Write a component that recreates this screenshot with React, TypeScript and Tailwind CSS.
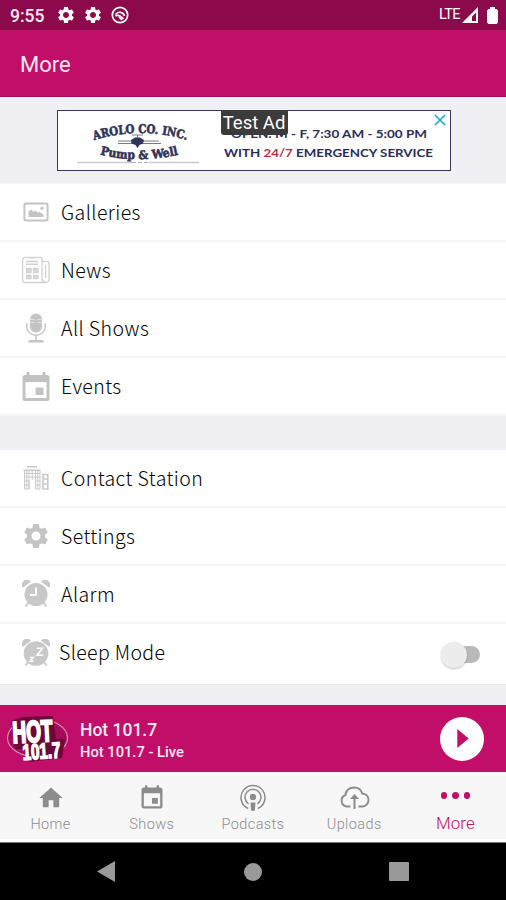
import React from 'react'
import { MdSettings, MdHome, MdEvent } from 'react-icons/md'

const SANS = "font-['Noto_Sans_CJK_SC','Noto_Sans',sans-serif]"

function GalleryIcon() {
  return (
    <svg width="26" height="20" viewBox="0 0 26 20" fill="none">
      <rect x="1.4" y="1.4" width="23.2" height="17.2" rx="2" stroke="#c4c4c4" strokeWidth="2" />
      <path d="M5.500 15V9.500L8 7.500l2.700 2.200 1.800-1 2.200 1.800 1.500-.8 4.300 2.800V15z" fill="#c4c4c4" />
      <circle cx="19" cy="6.2" r="1.7" fill="#c8c8c8" />
    </svg>
  )
}

function NewsIcon() {
  return (
    <svg width="30" height="28" viewBox="0 0 30 28" fill="none" stroke="#d2d2d2" strokeWidth="1.3">
      <path d="M21 24V3a1.5 1.5 0 0 0-1.5-1.5h-16A2 2 0 0 0 1.6 3.5v21a2 2 0 0 0 2 2H25a3 3 0 0 0 3-3V7.5a2 2 0 0 0-2-2h-5" />
      <path d="M21 23a3 3 0 0 0 3 3M24.5 9v13" />
      <path d="M5 5.500h12M5 8.200h12" strokeWidth="1.600" />
      <path d="M5.500 12.500h4.500v4H5.500zM12.500 12.500H17v4h-4.500zM5.500 19.500H10v3H5.500zM12.500 19.500H17v3h-4.500z" fill="#dadada" />
    </svg>
  )
}

function MicIcon() {
  return (
    <svg width="22" height="30" viewBox="0 0 22 30" fill="none" stroke="#c4c4c4">
      <rect x="5" y="0.5" width="12" height="19" rx="6" fill="#c4c4c4" stroke="none" />
      <path d="M5 6.500h4.500M5 9.500h4.500M12.500 6.500H17M12.500 9.500H17" stroke="#e6e6e6" strokeWidth="0.900" />
      <path d="M1.700 10.500v3a9.300 8.800 0 0 0 18.600 0v-3M11 22.500V28" strokeWidth="1.500" />
      <path d="M3 29.500q0-2.500 2.500-2.500h11q2.500 0 2.500 2.500z" fill="#c4c4c4" stroke="none" />
    </svg>
  )
}

function CalendarIcon() {
  return (
    <svg width="28" height="31" viewBox="0 0 28 31">
      <path fillRule="evenodd" d="M4.500 1h3v3h13V1h3v3H25a2.500 2.500 0 0 1 2.500 2.500v21A2.500 2.500 0 0 1 25 30H3a2.500 2.500 0 0 1-2.500-2.500v-21A2.500 2.500 0 0 1 3 4h1.500zM3.500 11v16h21V11z" fill="#c2c2c2" />
      <path d="M13.500 16.500h8v7.500h-8z" fill="#c2c2c2" />
    </svg>
  )
}

function BuildingIcon() {
  return (
    <svg width="26" height="24" viewBox="0 0 26 24" fill="none" stroke="#cacaca">
      <path d="M4 .8h10M0.500 4.200h17" strokeWidth="1.500" />
      <path d="M1.500 5v18h4.500V11.500M17 5v18h-4.500V11.500M6 23v-9M1.500 7.500H17M6 5v6M9.200 5v9M12.500 5v7M1.500 11H17M1.500 15H6M12.500 15H17M1.500 19H6M12.500 19H17M3.800 5v18M14.800 5v18" strokeWidth="1" />
      <path d="M20 8.500h4.800V23H20zM20 13h5M20 18h5" strokeWidth="1.600" />
    </svg>
  )
}

function ClockIcon({ sleep = false }: { sleep?: boolean }) {
  return (
    <svg width="28" height="28" viewBox="0 0 28 28" fill="#c8c8c8">
      <path d="M.8 7.800a5 5 0 0 1 8.200-6zM27.200 7.800a5 5 0 0 0-8.200-6z" />
      <path d="M6.500 22.500 3.500 26.500M21.500 22.500l3 4" stroke="#c8c8c8" strokeWidth="1.800" />
      <circle cx="14" cy="14.5" r={sleep ? 12.3 : 11.5} />
      {sleep ? (
        <path d="M14.500 9.200h6l-5.500 7h6.300M7.800 18.500h3.500l-3.300 3.800h3.600" fill="none" stroke="#fff" strokeWidth="1.500" />
      ) : (
        <path d="M14 7.500v7.500H8" fill="none" stroke="#fff" strokeWidth="1.900" />
      )}
    </svg>
  )
}

function PodcastIcon() {
  return (
    <svg width="28" height="28" viewBox="0 0 28 28" fill="none" stroke="#8c8c8c" strokeWidth="1.500">
      <path d="M9.200 24.500a12 12 0 1 1 9.600 0" />
      <path d="M9.500 19.800a8 8 0 1 1 9 0" />
      <circle cx="14" cy="13" r="3.2" fill="#8c8c8c" stroke="none" />
      <path d="M11.500 18.500h5l-.6 8.200h-3.800z" fill="#8c8c8c" stroke="none" />
    </svg>
  )
}

function UploadIcon() {
  return (
    <svg width="31" height="24" viewBox="0 0 31 24" fill="none" stroke="#8c8c8c" strokeWidth="1.900">
      <path d="M11.500 20.500H7.500A6 6 0 0 1 6.500 9C6.500 4.500 10.500 1.500 15 1.500c4 0 7.300 2.500 8.200 6 3.800.2 6.300 3 6.300 6.500s-2.800 6.500-6.500 6.500h-3.500" />
      <path d="M15.500 23V10.500" strokeWidth="2" />
      <path d="M11 13l4.500-5 4.500 5z" fill="#8c8c8c" stroke="none" />
    </svg>
  )
}

function AdBanner() {
  return (
    <div className="relative h-[61px] w-[394px] border-[1.500px] border-[#34345f] bg-white">
      <svg width="392" height="59" viewBox="58 111 392 59" className="block">
        <path id="archTop" d="M94 140Q140 126 187 140" fill="none" />
        <path id="archBottom" d="M100 154.500Q139 164 179 154.500" fill="none" />
        <g fontFamily="'DejaVu Serif', serif" fontWeight="700" fill="#303358" stroke="#303358" strokeWidth="0.600">
          <text fontSize="12"><textPath href="#archTop" textLength="94" lengthAdjust="spacingAndGlyphs">AROLO CO. INC.</textPath></text>
          <text fontSize="12"><textPath href="#archBottom" textLength="79" lengthAdjust="spacingAndGlyphs">Pump &amp; Well</textPath></text>
        </g>
        <path d="M132 135h11M137.500 135v4M118 141h14M143 141h16M118 143.500h43" stroke="#777a91" strokeWidth="1.100" fill="none" />
        <path d="M131 140l4-2.500h5l4 2.500-1 3.500-3.500 1.500-2 3-2-3-4-1.500z" fill="#303358" />
        <path d="M77 162.500h55M149 162.500h50" stroke="#c9cccb" strokeWidth="1.500" />
        <path d="M132 162.500h17" stroke="#aaaeb4" strokeWidth="1" strokeDasharray="4 2" />
        <g fontFamily="Lato, sans-serif" fontWeight="700" fill="#2c2b59" fontSize="12">
          <text x="231" y="138" textLength="196" lengthAdjust="spacingAndGlyphs">OPEN: M - F, 7:30 AM - 5:00 PM</text>
          <text x="224" y="156.5" textLength="209" lengthAdjust="spacingAndGlyphs">WITH <tspan fill="#b5303a">24/7</tspan> EMERGENCY SERVICE</text>
        </g>
        <path d="M435 115l10 10M445 115l-10 10" stroke="#19a9cc" strokeWidth="1.600" />
      </svg>
      <div className="absolute left-[163px] top-[-1px] h-[25px] w-[67px] rounded-b-[3px] bg-[#3b3b3b] text-center font-['Roboto',sans-serif] text-[18.500px] leading-[27px] text-white whitespace-nowrap">Test Ad</div>
    </div>
  )
}

function StationLogo() {
  return (
    <svg width="64" height="52" viewBox="0 0 64 52" className="overflow-visible">
      <ellipse cx="31.5" cy="25" rx="30" ry="19" fill="#a50b59" stroke="#d796b5" strokeWidth="1.100" />
      <path d="M5 8l12-4 30-1 3 23h9l-3 19-33 4-3-13H9z" fill="#6c0739" />
      <g fontFamily="'Liberation Sans', sans-serif" fontWeight="700" fill="#fff" stroke="#fff" strokeWidth="1.500">
        <text transform="translate(7 30) rotate(-3) scale(1 1.500)" fontSize="20" textLength="40" lengthAdjust="spacingAndGlyphs">HOT</text>
        <text transform="translate(17 47) rotate(-4)" fontSize="22" textLength="38" lengthAdjust="spacingAndGlyphs">101.7</text>
      </g>
    </svg>
  )
}

const contentRows = [
  { label: 'Galleries', icon: <GalleryIcon /> },
  { label: 'News', icon: <NewsIcon /> },
  { label: 'All Shows', icon: <MicIcon /> },
  { label: 'Events', icon: <CalendarIcon /> },
]

const stationRows = [
  { label: 'Contact Station', icon: <BuildingIcon /> },
  { label: 'Settings', icon: <MdSettings size={30} color="#c4c4c4" /> },
  { label: 'Alarm', icon: <ClockIcon /> },
]

const tabs = [
  { label: 'Home', icon: <MdHome size={28} /> },
  { label: 'Shows', icon: <MdEvent size={28} /> },
  { label: 'Podcasts', icon: <PodcastIcon /> },
  { label: 'Uploads', icon: <UploadIcon /> },
]

function Row({ label, icon }: { label: string; icon: React.ReactNode }) {
  return (
    <div className="flex h-[58px] items-center border-b-2 border-[#f5f5f6] bg-white pl-[21px]">
      <div className="flex w-[30px] justify-center">{icon}</div>
      <span className={`${SANS} -mt-px ml-[10px] text-[19.500px] font-light leading-[28px] tracking-[0.430px] text-black`}>{label}</span>
    </div>
  )
}

export default function App() {
  return (
    <main className="flex h-[900px] w-[506px] flex-col overflow-hidden bg-[#f0eff4] font-['Roboto',sans-serif]">
      <div className="flex h-[30px] shrink-0 items-center bg-[#8c0a4c] pl-[10px] pr-[8px] text-white">
        <span className="w-[35px] pt-[2px] text-[17.500px] font-medium leading-[30px] text-[#ffe9f1]">9:55</span>
        <MdSettings size={20} className="ml-[11px]" />
        <MdSettings size={20} className="ml-[7px]" />
        <svg width="18" height="18" viewBox="0 0 18 18" className="ml-[8px]" fill="none" stroke="#fff" strokeWidth="1.700">
          <circle cx="9" cy="9" r="7.7" />
          <path d="M4.500 8.500a5 5 0 0 1 9 1.500M4.500 10q3.500-2 8 3M8 11l3 3" strokeWidth="1.600" />
        </svg>
        <span className="ml-auto text-[14.500px] leading-[30px] tracking-[-0.6px]">LTE</span>
        <svg width="17" height="16" viewBox="0 0 17 16" className="ml-[2px]">
          <path fillRule="evenodd" d="M16 0v16H0zM14 5.500l-4 4V14h4z" fill="#fff" />
        </svg>
        <svg width="11" height="17" viewBox="0 0 11 17" className="ml-[8px]" fill="#fff">
          <path d="M3 0h5v2h1.500L11 3.500V15.500L9.500 17h-8L0 15.500v-12L1.500 2H3z" />
        </svg>
      </div>

      <header className="flex h-[67px] shrink-0 items-center border-b border-[#a50a5b] bg-[#c00e69] pl-[20px] pt-[3px] text-[22px] text-[#ffe7f1]">More</header>

      <div className="flex h-[86px] shrink-0 justify-center pl-px pt-[13px]">
        <AdBanner />
      </div>

      <section className="shrink-0 border-t border-[#f7f7fa] bg-white">
        {contentRows.map((r) => <Row key={r.label} label={r.label} icon={r.icon} />)}
      </section>

      <section className="mt-[34px] shrink-0">
        {stationRows.map((r) => <Row key={r.label} label={r.label} icon={r.icon} />)}
        <div className="flex h-[61px] items-center border-b border-[#e9e9ec] bg-white pb-[3px] pl-[21px] pr-[26px]">
          <div className="flex w-[30px] justify-center"><ClockIcon sleep /></div>
          <span className={`${SANS} -mt-px ml-[8px] text-[19.500px] font-light leading-[28px] tracking-[0.350px] text-black`}>Sleep Mode</span>
          <div className="relative ml-auto mt-[4px] h-[17px] w-[38px] rounded-full bg-[#b9b9b9]">
            <div className="absolute left-[-1px] top-[-4px] h-[26px] w-[26px] rounded-full bg-[#ececec] shadow-[0_1px_2px_rgba(0,0,0,0.250)]" />
          </div>
        </div>
      </section>

      <div className="mt-[20px] flex h-[67px] shrink-0 items-center bg-[#c00e69] pl-[6px] pr-[22px] text-[#ffe9f2]">
        <StationLogo />
        <div className="ml-[10px] pt-[4px] font-medium">
          <div className="text-[17.500px] leading-[22px]">Hot 101.7</div>
          <div className="text-[14.700px] leading-[22px]">Hot 101.7 - Live</div>
        </div>
        <div className="ml-auto flex h-[44px] w-[44px] items-center justify-center rounded-full bg-white">
          <svg width="12" height="19" viewBox="0 0 12 20" className="ml-[2px]"><path d="M0 0l12 10L0 20z" fill="#c00e69" /></svg>
        </div>
      </div>

      <nav className="grid h-[70px] shrink-0 grid-cols-5 border-b-[3px] border-white bg-[#f7f7f7] text-[#8c8c8c]">
        {tabs.map((t) => (
          <div key={t.label} className="flex flex-col items-center pt-[11px]">
            <div className="flex h-[29px] items-center">{t.icon}</div>
            <span className="mt-[3px] text-[14.500px] font-light leading-[20px] tracking-[0.4px]">{t.label}</span>
          </div>
        ))}
        <div className="flex flex-col items-center pt-[20px] text-[#c00e69]">
          <div className="flex gap-[5px]">
            <i className="h-[6.500px] w-[6.500px] rounded-full bg-current" />
            <i className="h-[6.500px] w-[6.500px] rounded-full bg-current" />
            <i className="h-[6.500px] w-[6.500px] rounded-full bg-current" />
          </div>
          <span className="mt-[13px] text-[17px] leading-[22px] font-light">More</span>
        </div>
      </nav>

      <div className="flex h-[58px] shrink-0 items-center border-t border-[#777] bg-black">
        <svg width="18" height="21" viewBox="0 0 18 21" className="ml-[97px]"><path d="M18 0v21L0 10.500z" fill="#999" /></svg>
        <div className="ml-[129px] h-[18px] w-[18px] rounded-full bg-[#999]" />
        <div className="ml-[127px] h-[19px] w-[20px] rounded-[1px] bg-[#999]" />
      </div>
    </main>
  )
}
